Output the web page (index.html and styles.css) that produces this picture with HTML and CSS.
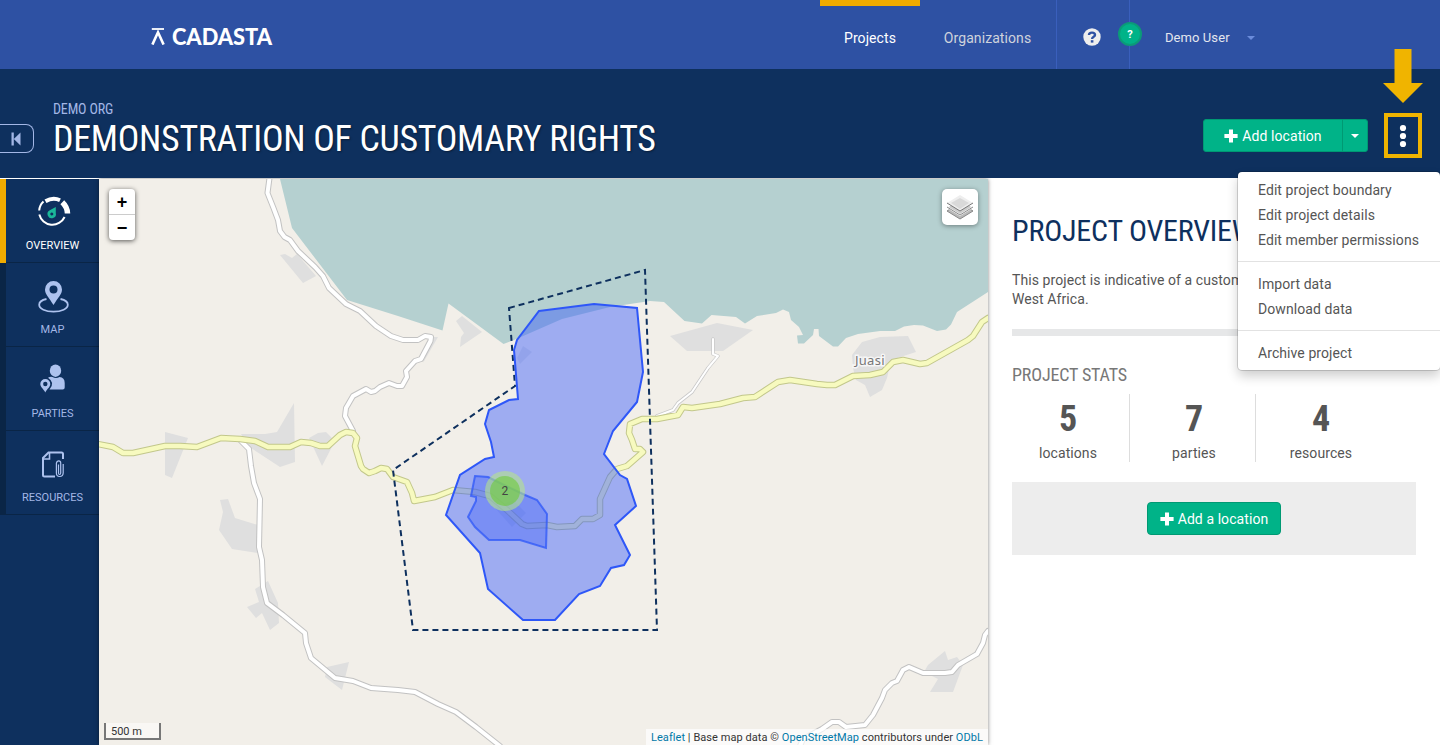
FILE: index.html
```html
<!DOCTYPE html>
<html lang="en">
<head>
<meta charset="utf-8">
<title>Demonstration of Customary Rights</title>
<link rel="stylesheet" href="styles.css">
</head>
<body>
<header class="topbar">
  <a class="brand">
    <svg class="brand-mark" width="14" height="18" viewBox="0 0 14 18"><path d="M.8 2h12.200" fill="none" stroke="#fff" stroke-width="1.800"/><path d="M1.400 17.600 7 5.300 12.600 17.600" fill="none" stroke="#fff" stroke-width="2.600"/></svg>
    <svg class="brand-name" width="104" height="24" viewBox="0 0 104 24"><text x="0" y="19.500" textLength="100" lengthAdjust="spacingAndGlyphs">CADASTA</text></svg>
  </a>
  <nav class="topnav">
    <a class="nav-link nav-projects">Projects</a>
    <a class="nav-link nav-orgs">Organizations</a>
    <a class="nav-help">
      <svg width="18" height="18" viewBox="0 0 18 18"><circle cx="9" cy="9" r="8.700" fill="#eee"/><path d="M6 7C6 3.800 12 3.800 12 7 12 9 9.100 8.600 9.100 11" fill="none" stroke="#2e51a3" stroke-width="2.400"/><rect x="7.800" y="12.200" width="2.600" height="2.400" fill="#2e51a3"/></svg>
      <span class="beacon">?</span>
    </a>
    <a class="nav-user"><span>Demo User</span><i class="caret caret-blue"></i></a>
  </nav>
</header>

<section class="project-head">
  <button class="collapse"><svg width="10" height="14" viewBox="0 0 10 14"><path d="M.5.5h2.300v13H.5zM9.500.5v13L2.800 7z" fill="#a3b7e6"/></svg></button>
  <div class="titles">
    <div class="org">DEMO ORG</div>
    <h1>DEMONSTRATION OF CUSTOMARY RIGHTS</h1>
  </div>
  <div class="actions">
    <div class="btn-group">
      <button class="btn btn-main"><svg class="plus" width="14" height="14" viewBox="0 0 14 14"><path d="M7 .4v13.200M.4 7h13.200" stroke="#fff" stroke-width="4"/></svg><span>Add location</span></button><button class="btn btn-toggle"><i class="caret"></i></button>
    </div>
    <div class="more">
      <svg class="dots" width="8" height="24" viewBox="0 0 8 24"><g fill="#fff"><circle cx="4" cy="4" r="3.100"/><circle cx="4" cy="12" r="3.100"/><circle cx="4" cy="20" r="3.100"/></g></svg>
      <svg class="pointer" width="40" height="56" viewBox="0 0 40 56"><path d="M11.500 1h17v34H40L20 55 0 35h11.500z" fill="#f0b400"/></svg>
      <ul class="menu">
        <li>Edit project boundary</li><li>Edit project details</li><li>Edit member permissions</li>
        <li class="divider"></li>
        <li>Import data</li><li>Download data</li>
        <li class="divider"></li>
        <li>Archive project</li>
      </ul>
    </div>
  </div>
</section>

<main class="content">
  <nav class="side">
    <a class="side-item active">
      <svg width="36" height="36" viewBox="0 0 36 36"><g fill="none" stroke="#fff"><path d="M8.500 7.500A13.500 13.500 0 0 0 4.200 16.500M4.300 20.500A13.500 13.500 0 0 0 29.600 23" stroke-width="2"/><path d="M10.500 7.200Q18 2.800 25 6.200" stroke-width="4"/><path d="M27.300 8.300Q32.300 13 32.500 19.500" stroke-width="5.500"/></g><path d="M20.800 13V19a4.200 4.200 0 1 1-6-2.700zM16.800 18.400a1.500 1.500 0 1 0 .01 0z" fill="#1bb899" fill-rule="evenodd"/></svg>
      <span>OVERVIEW</span>
    </a>
    <a class="side-item">
      <svg width="36" height="36" viewBox="0 0 36 36"><path d="M18.500 27C14 19.500 10 16.500 10 11.500a8.500 8.500 0 0 1 17 0c0 5-4 8-8.500 15.500z" fill="#adc2ee"/><circle cx="18.500" cy="11.500" r="4" fill="#0e305e"/><path d="M11.500 21C6.500 22 4.200 24.500 4.200 26.800 4.200 30.800 10.500 33.700 18.500 33.700S32.800 30.800 32.800 26.800C32.800 24.500 30.500 22 25.500 21" fill="none" stroke="#adc2ee" stroke-width="1.800"/></svg>
      <span>MAP</span>
    </a>
    <a class="side-item">
      <svg width="36" height="36" viewBox="0 0 36 36"><g fill="#adc2ee"><ellipse cx="20.500" cy="8.700" rx="5.700" ry="6.200"/><path d="M13 15.700q2.500-1.500 4.500-.7 3.500 2 7 0 5.200.5 5.200 6V25.500q0 2-2 2H14.500Q20.500 20.500 13 15.700z"/><path d="M10.300 30.500C8.300 26.500 5.300 25 5.300 22a5 5 0 0 1 10 0C15.300 25 12.300 26.500 10.300 30.500z"/></g><circle cx="10.300" cy="22" r="2.200" fill="#0e305e"/></svg>
      <span>PARTIES</span>
    </a>
    <a class="side-item">
      <svg width="36" height="36" viewBox="0 0 36 36"><g fill="none" stroke="#adc2ee"><path d="M20 30.500H9.500Q8 30.500 8 29V12L13.500 6.500H26.500Q28 6.500 28 8V13" stroke-width="2"/><path d="M8.500 13h6V7" stroke-width="1.600"/><path d="M23.500 18.500v8.500q0 1.500 1.100 1.500t1.100-1.500V17q0-2.200-1.900-2.200t-2.400 2.400v9.800q0 3.500 3.300 3.500t3.500-3.500V18" stroke-width="1.200"/></g></svg>
      <span>RESOURCES</span>
    </a>
  </nav>

  <section class="map">
    <svg class="map-canvas" viewBox="99 179 889 566" width="889" height="566">
      <path class="water" d="M280 179 292 228 347 300 398 316 442.500 330.500 448.500 303.500 503.500 344 514 340 562 319 610 307 650 301 664 302 684.500 321 702 323.500 711.500 315 736 317 745 323.500 757 316 776 313 783 309.500 789 312 791 320 799 327 803 335 797 335.500 798 343.500 804 343.500 813 335 814 329H818.500L819 336 833 346.500H838L846 338 858 334 880 331H895L904 326.500 914 325 923 325.500 937 331 946 329.500 951 324.500 957 312 988 292V179z"/>
      <g class="builtup">
        <path d="M280 255 285 254 292 258 297 254 316 276 303 283z"/>
        <path d="M165 432 188 438 172 478 165 475z"/>
        <path d="M241 434H265L277 432 294 403 295 462 280 467 248 446z"/>
        <path d="M309 438 318 433 326 432 335 441 322 466z"/>
        <path d="M220 500 228 499 235 518 258 525V553L232 549 219 530 223 512z"/>
        <path d="M255 589 268 581 278 603 279 623 270 630 262 613 256 618 247 607 259 602z"/>
        <path d="M327 667 349 662 342 690 325 677z"/>
        <path d="M456 321 462 316 482 332 460 347 461 337 464 333z"/>
        <path d="M517 358 523 346 532 352 520 364z"/>
        <path d="M431 337H438L423 363z"/>
        <path d="M670 336 717 323 753 330 723 351H687z"/>
        <path d="M852 355 862 342 880 337 908 336 916 352 891 360 887 378 882 390 870 397 865 385 856 380 853 368z"/>
        <path d="M924 672 928 665 945 651 948 660 957 657 963 665 953 692H930L938 679z"/>
        <path d="M495 508 513 500 526 513 512 527z"/>
      </g>
      <defs>
        <path id="coast" d="M269.500 178 267.500 193 273.500 208 278 220 280 231 284.500 237 290 240 298 251 315 267 323 276 329 288 346 304 360 311 376 326 391 336 403 340H418L425 336 431 337 430.500 341 421 359 415 361 406 371 407 377 402 386H397L389 383 380 387 375 391 371 392 366 389 353 396 346 408 345 416 353 431"/>
        <path id="south" d="M241 441 249 449 251 466 254 483 260 499 259 547 262 560 263 587 267 603 283 615 305 633 306 643 311 658 335 678 353 681 371 688 398 690 415 692 438 704 456 712 476 727 500 746"/>
        <path id="east" d="M800 746 803 739 822 729 832 722H839L846 727 865 725 873 715 882 698 885 690 892 683 897 681 903 670 909 667 923 673H945L952 672 958 665 977 654 983 643 985 635 988 631"/>
        <path id="track" d="M713 339V354L718 356 708 368 698 383 692 392 678 403 673 410 657 416"/>
        <path id="main" d="M98 444 113 447 123 453H133L165 446 180 446 197 447 221 438 240 439 255 441 268 447H290L301 442 311 443 320 446 328 446 340 435 346 432 353 433 357 438 355 446 361 466 363 469 369 473 375 471 381 468 387 469 393 477 407 482 412 493 414 501 435 497 453 490 475 492 490 496 507 510 522 524 527 526 547 525 557 527 575 526 582 519 593 519 600 515V499L610 477 617 469 627 466 643 452 640 449H635L632 440 629 433 630 424 642 419 657 419 678 415 683 407 692 408 720 404 743 398 755 397 778 382 790 380 817 384 827 385H835L853 376 870 375 883 372 893 362 903 360 920 364 927 363 968 340 973 336 982 322 988 318"/>
      </defs>
      <g class="road">
        <g class="road-edge"><use href="#coast"/><use href="#south"/><use href="#east"/></g>
        <use class="track-edge" href="#track"/><use class="track-fill" href="#track"/>
        <g class="road-fill"><use href="#coast"/><use href="#south"/><use href="#east"/></g>
        <use class="main-edge" href="#main"/><use class="main-fill" href="#main"/>
      </g>
      <text class="place" x="855" y="364.500" textLength="29.500">Juasi</text>
      <path class="boundary" d="M509 308 645 270 657 630H413L393 470 515 386z"/>
      <path class="parcel" d="M539 311 594 304 637 308 643 372 637 402 613 431 604 454 620 475 627 479 636 506 615 525 630 555 624 565 611 568 600 586 579 594 555 620H523L488 589 480 553 446 515 460 475 485 459 494 457 491 442 485 424 489 410 509 400 518 399 514 350 517 340z"/>
      <path class="parcel inner" d="M475 476 488 477 500 483 525 495 537 500 547 514 546 548 520 540H489L475 527 468 517 476 501V497L471 496z"/>
      <circle cx="505" cy="491" r="20" fill="#b5e28c" fill-opacity=".6"/>
      <circle cx="505" cy="491" r="15" fill="#6ecc39" fill-opacity=".6"/>
      <text class="cluster" x="505" y="495" text-anchor="middle">2</text>
    </svg>
    <div class="zoom-control"><button>+</button><button>−</button></div>
    <button class="layers"><svg width="26" height="26" viewBox="0 0 26 26"><path d="M0 17 13 25 26 17 13 9z" fill="#b9b9b9" stroke="#888"/><path d="M0 13 13 21 26 13 13 5z" fill="#ccc" stroke="#fff" stroke-width="1.500"/><path d="M0 13 13 21 26 13" fill="none" stroke="#888"/><path d="M0 9 13 17 26 9 13 1z" fill="#eee"/><path d="M4 9 13 4l9 5-9 6z" fill="#d9d9d9"/><path d="M0 9 13 17 26 9" fill="none" stroke="#777"/></svg></button>
    <div class="scale">500 m</div>
    <div class="attribution"><a>Leaflet</a> | Base map data © <a>OpenStreetMap</a> contributors under <a>ODbL</a></div>
  </section>

  <aside class="overview">
    <h2>PROJECT OVERVIEW</h2>
    <p>This project is indicative of a customary<br>West Africa.</p>
    <hr>
    <h3>PROJECT STATS</h3>
    <div class="stats">
      <div class="stat"><b>5</b><span>locations</span></div>
      <div class="stat"><b>7</b><span>parties</span></div>
      <div class="stat"><b>4</b><span>resources</span></div>
    </div>
    <div class="well"><button class="btn btn-add"><svg class="plus" width="14" height="14" viewBox="0 0 14 14"><path d="M7 .4v13.200M.4 7h13.200" stroke="#fff" stroke-width="4"/></svg>Add a location</button></div>
  </aside>
</main>
</body>
</html>
```
FILE: styles.css
```css
* { box-sizing: border-box; }
body { margin: 0; width: 1440px; height: 745px; overflow: hidden; display: flex; flex-direction: column; font: 14px/19px Roboto, sans-serif; letter-spacing: .08px; color: #555; background: #fff; }
button { font: inherit; letter-spacing: inherit; margin: 0; padding: 0; border: 0; cursor: pointer; }
h1, h2, h3, p, ul { margin: 0; padding: 0; font-weight: 400; }
h1, h2, h3, .org, .stat b { font-family: "Roboto Condensed", Roboto, sans-serif; font-stretch: 75%; letter-spacing: 0; white-space: nowrap; }

.topbar { height: 69px; flex: none; background: #2e51a3; display: flex; }
.brand { width: 820px; padding: 27px 0 0 151px; display: flex; gap: 7px; }
.brand-name { margin-top: -2px; }
.brand-name text { font: 900 23px Lato, sans-serif; letter-spacing: 0; fill: #fff; }
.topnav { display: flex; color: #fff; }
.nav-link { padding-top: 29px; text-align: center; }
.nav-projects { width: 100px; border-top: 6px solid #f0ab00; padding-top: 23px; }
.nav-orgs { width: 136px; padding-right: 1px; color: #cfd3dc; }
.nav-help { width: 74px; border: 1px solid #3a5fbc; border-width: 0 1px; position: relative; padding: 28px 0 0 26px; }
.beacon { position: absolute; left: 61px; top: 22px; width: 24px; height: 24px; border: 2px solid #0b9b78; border-radius: 50%; background: #00b388; font-size: 11px; line-height: 21px; text-align: center; font-weight: 700; }
.nav-user { display: flex; padding: 28px 0 0 35px; gap: 17px; font-size: 13px; color: #e3e6ee; }
.caret { display: block; width: 0; height: 0; border: 4px solid transparent; border-top-color: #fff; border-bottom: 0; }
.caret-blue { border-top-color: #6b8cdb; margin-top: 8px; }

.project-head { height: 109px; flex: none; background: #0e305e; display: flex; align-items: flex-start; z-index: 3; }
.collapse { width: 34px; height: 29px; margin-top: 55px; padding: 0 0 0 11px; line-height: 0; background: transparent; border: 1px solid #a3b7e6; border-left: 0; border-radius: 0 8px 8px 0; display: flex; align-items: center; }
.titles { padding: 31px 0 0 19px; width: 1169px; }
.org { font-size: 14px; line-height: 18px; letter-spacing: -.15px; color: #a3b7e6; }
h1 { padding-top: 1px; font-size: 36px; line-height: 40px; letter-spacing: -.31px; color: #fff; text-shadow: 1px 1px 2px rgba(0,0,0,.4); }
.actions { display: flex; }
.btn-group { display: flex; margin-top: 50px; }
.btn { height: 33px; padding-top: 1px; background: #00b388; color: #fff; border: 1px solid #009973; border-radius: 3px; display: flex; align-items: center; justify-content: center; gap: 4px; }
.btn-main { width: 140px; border-radius: 3px 0 0 3px; }
.btn-toggle { width: 26px; margin-left: -1px; border-radius: 0 3px 3px 0; }
.more { position: relative; width: 38px; height: 45px; margin: 44px 0 0 16px; border: 4px solid #f0b400; display: flex; align-items: center; justify-content: center; }
.pointer { position: absolute; left: -5px; top: -69px; }
.menu { position: absolute; top: 55px; right: -22px; width: 202px; padding: 5px 0; list-style: none; background: #fff; border-radius: 4px; box-shadow: 0 0 0 1px rgba(0,0,0,.15), 0 6px 12px rgba(0,0,0,.2); }
.menu li { height: 25px; padding: 4px 20px 2px; white-space: nowrap; }
.menu .divider { height: 1px; padding: 0; margin: 9px 0; background: #e2e2e2; }

.content { flex: 1; margin-top: 1px; display: flex; min-height: 0; }
.side { width: 99px; background: #0e305e; }
.side-item { height: 84px; border-left: 6px solid #0a2546; box-shadow: inset 0 -1px #0a2546; display: flex; flex-direction: column; align-items: center; padding-top: 15px; gap: 7px; font-size: 11px; line-height: 18px; letter-spacing: 0; color: #a3b7e6; }
.side-item.active { border-left-color: #f0ab00; color: #fff; }
.map { position: relative; width: 889px; background: #f2efe9; overflow: hidden; box-shadow: 0 0 4px rgba(0,0,0,.5); }
.map-canvas { display: block; }
.water { fill: #b5d0d0; }
.builtup { fill: #dfdfdf; }
.road { fill: none; stroke-linejoin: round; stroke-linecap: round; }
.road-edge { stroke: #c2c2c2; stroke-width: 6; }
.road-fill { stroke: #fff; stroke-width: 4; }
.track-edge { stroke: #c9c9c9; stroke-width: 3.500px; }
.track-fill { stroke: #fff; stroke-width: 2; }
.main-edge { stroke: #c2c78b; stroke-width: 6.500px; }
.main-fill { stroke: #f7fabf; stroke-width: 4.500px; }
.place { font: 13px "Noto Sans", sans-serif; letter-spacing: 0; fill: #777; stroke: #fff; stroke-opacity: .7; stroke-width: 3px; paint-order: stroke; }
.boundary { fill: none; stroke: #0e305e; stroke-width: 2; stroke-dasharray: 6 4; }
.parcel { fill: #375afa; fill-opacity: .45; stroke: #2e57f8; stroke-width: 2; }
.parcel.inner { fill-opacity: .35; stroke-opacity: .75; }
.cluster { font: 12px Roboto, sans-serif; fill: #444; }
.zoom-control { position: absolute; left: 10px; top: 10px; width: 26px; background: #fff; border-radius: 4px; box-shadow: 0 1px 5px rgba(0,0,0,.65); }
.zoom-control button { display: block; width: 26px; height: 26px; background: none; color: #000; font: bold 18px/26px "Liberation Sans", sans-serif; letter-spacing: 0; }
.zoom-control button + button { height: 26px; border-top: 1px solid #ccc; line-height: 24px; margin-top: 0; }
.zoom-control button:first-child { height: 25px; }
.layers { position: absolute; right: 10px; top: 10px; width: 36px; height: 36px; padding: 5px; line-height: 0; background: #fff; border-radius: 5px; box-shadow: 0 1px 5px rgba(0,0,0,.4); }
.scale { position: absolute; left: 5px; bottom: 5px; width: 57px; height: 17px; border: 2px solid #777; border-top: 0; background: rgba(255,255,255,.5); padding-left: 5px; font-size: 11px; line-height: 17px; color: #333; letter-spacing: 0; }
.attribution { position: absolute; right: 0; bottom: 0; height: 16px; padding: 0 5px; background: rgba(255,255,255,.7); font-size: 11px; line-height: 18px; color: #333; letter-spacing: .06px; white-space: nowrap; }
.attribution a { color: #0078a8; }

.overview { width: 452px; padding: 32px 24px 0; }
h2 { font-size: 30px; line-height: 40px; letter-spacing: -.2px; color: #0e305e; }
.overview p { margin-top: 20px; }
hr { height: 7px; margin: 20px 0 0; border: 0; background: #e6e7e8; }
h3 { margin-top: 29px; font-size: 18px; line-height: 20px; letter-spacing: -.15px; color: #777; }
.stats { display: flex; margin: 9px 0 0 -8px; }
.stat { width: 126px; height: 68px; padding: 4px 0 0 3px; text-align: center; border-right: 1px solid #ddd; }
.stat:last-child { border: 0; width: 127px; }
.stat b { display: block; font-size: 36px; line-height: 42px; font-weight: 700; }
.stat span { display: block; line-height: 26px; }
.well { margin-top: 20px; height: 73px; background: #ededed; display: flex; align-items: center; justify-content: center; }
.btn-add { width: 134px; border-radius: 4px; }
```
